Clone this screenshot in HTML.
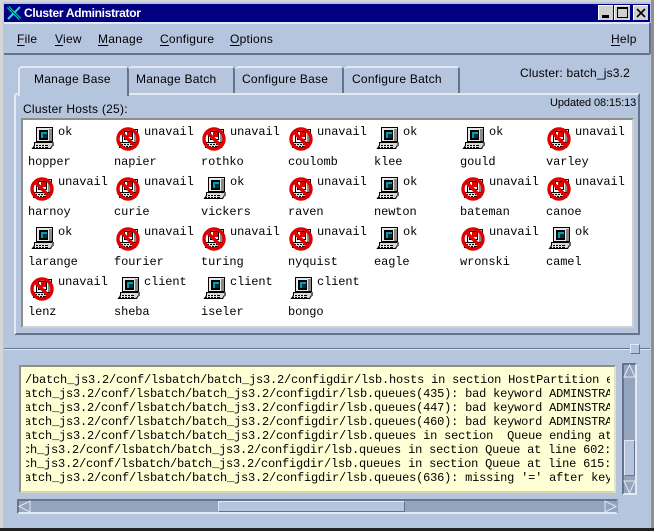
<!DOCTYPE html>
<html><head><meta charset="utf-8"><style>
html,body{margin:0;padding:0}
body{width:654px;height:531px;overflow:hidden;position:relative;background:#b5c5de;font:12px "Liberation Sans",sans-serif;color:#000}
div,span.a,svg.a{position:absolute}
.t{white-space:nowrap;line-height:14px;height:14px;letter-spacing:.25px}
u{text-underline-offset:2px}
.m{font-family:"Liberation Mono",monospace;font-size:12px;letter-spacing:-.1px;white-space:pre;line-height:14px;height:14px;margin-top:1px}
.tab{height:27px;top:66px;background:#b5c5de;border-top:2px solid #e2e9f3;box-sizing:border-box;border-right:2px solid #66738a;border-radius:4px 4px 0 0}
.lg{left:0;font-family:"Liberation Mono",monospace;font-size:12px;letter-spacing:-.2px;white-space:pre;line-height:14px;height:14px}
</style></head><body>
<svg width="0" height="0" style="position:absolute"><defs>
<symbol id="pc" viewBox="0 0 26 24"><g shape-rendering="crispEdges">
<path fill="#e8e8e8" stroke="#000" d="M6.5 .5h16v14h-16z"/>
<path fill="#8a8a8a" d="M19 2h3v12h-3z"/>
<path fill="#000" d="M9 3h9v10H9z"/>
<path fill="#00a0b0" d="M11 5h6v6h-6z"/>
<path fill="#003040" d="M13 7h4v4h-4z"/>
<path fill="#d8d8d8" stroke="#000" d="M4.5 15.5h18v3l-2 3h-18l2-3z"/>
<path fill="#000" d="M4 18h14v1H4zM3 20h15v1H3z"/><path fill="#fff" d="M5 18h1v1H5zM8 18h1v1H8zM11 18h1v1h-1zM14 18h1v1h-1zM5 20h1v1H5zM8 20h1v1H8zM11 20h1v1h-1zM14 20h1v1h-1z"/>
<path fill="#666" d="M22 15h2v4h-2z"/></g></symbol>
<symbol id="no" viewBox="0 0 26 24"><g shape-rendering="crispEdges">
<path fill="#f4f4f4" stroke="#000" d="M6.5 2.5h15v13h-15z"/>
<path fill="#8a8a8a" d="M18 4h3v11h-3z"/>
<path fill="#000" d="M8 4h9v9H8z"/>
<path fill="#fff" d="M9 5h7v7H9z"/>
<path fill="#e80000" d="M11 5h5v5h-5z"/>
<path fill="#d8d8d8" stroke="#000" d="M4.5 15.5h17v2l-2 3h-16l1-3z"/>
<path fill="#000" d="M5 17h13v1H5zM4 19h13v1H4z"/><path fill="#fff" d="M7 17h1v1H7zM10 17h1v1h-1zM13 17h1v1h-1zM6 19h1v1H6zM9 19h1v1H9zM12 19h1v1h-1z"/></g>
<circle cx="12" cy="12" r="10" fill="none" stroke="#e00000" stroke-width="3.4"/>
<path d="M5 5L19 19" stroke="#e00000" stroke-width="3.4"/></symbol>
</defs></svg>

<!-- window frame -->
<div style="left:0;top:0;width:654px;height:2px;background:#d6d6d6"></div>
<div style="left:0;top:0;width:3px;height:531px;background:#d6d6d6"></div>
<div style="left:651px;top:0;width:3px;height:531px;background:#8f8f8f"></div>
<div style="left:0;top:528px;width:654px;height:3px;background:#222"></div>
<div style="left:4px;top:4px;width:646px;height:18px;background:#000080"></div>
<svg class="a" style="left:6px;top:5px" width="16" height="16" viewBox="0 0 16 16"><path d="M2 2L14 14" stroke="#00d8c8" stroke-width="3"/><path d="M14 2L2 14" stroke="#20e0d0" stroke-width="2"/><path d="M2 2L14 14" stroke="#000" stroke-width=".8"/></svg>
<div class="t" style="left:24px;top:6px;color:#fff;font-weight:bold;font-size:12px;letter-spacing:-.3px">Cluster Administrator</div>
<div style="left:598px;top:5px;width:15px;height:15px;background:#d0d0d0;border-top:1px solid #fff;border-left:1px solid #fff;box-sizing:border-box"><div style="left:3px;top:9px;width:7px;height:3px;background:#000"></div></div>
<div style="left:614px;top:5px;width:16px;height:15px;background:#d0d0d0;border-top:1px solid #fff;border-left:1px solid #fff;box-sizing:border-box"><div style="left:2px;top:1px;width:11px;height:11px;box-sizing:border-box;border:1px solid #000;border-top-width:2px"></div></div>
<div style="left:633px;top:5px;width:15px;height:15px;background:#d0d0d0;border-top:1px solid #fff;border-left:1px solid #fff;box-sizing:border-box"><svg class="a" style="left:2px;top:2px" width="10" height="10"><path d="M1 1L9 9M9 1L1 9" stroke="#000" stroke-width="1.6"/></svg></div>

<!-- menu -->
<div style="left:4px;top:22px;width:646px;height:2px;background:#e2e9f3"></div>
<div style="left:4px;top:53px;width:646px;height:2px;background:#66738a"></div>
<div style="left:649px;top:23px;width:2px;height:31px;background:#66738a"></div>
<div class="t" style="left:17px;top:32px"><u>F</u>ile</div>
<div class="t" style="left:55px;top:32px"><u>V</u>iew</div>
<div class="t" style="left:98px;top:32px"><u>M</u>anage</div>
<div class="t" style="left:160px;top:32px"><u>C</u>onfigure</div>
<div class="t" style="left:230px;top:32px"><u>O</u>ptions</div>
<div class="t" style="left:611px;top:32px"><u>H</u>elp</div>

<!-- panel -->
<div style="left:14px;top:93px;width:626px;height:242px;box-sizing:border-box;border:2px solid;border-color:#e2e9f3 #66738a #66738a #e2e9f3;border-radius:3px 0 0 0"></div>
<!-- tabs -->
<div class="tab" style="left:128px;width:107px"></div>
<div class="tab" style="left:235px;width:109px"></div>
<div class="tab" style="left:344px;width:116px"></div>
<div class="tab" style="left:18px;width:111px;height:30px;border-left:2px solid #e2e9f3;z-index:2"></div>
<div class="t" style="left:34px;top:72px;z-index:3">Manage Base</div>
<div class="t" style="left:136px;top:72px">Manage Batch</div>
<div class="t" style="left:242px;top:72px">Configure Base</div>
<div class="t" style="left:352px;top:72px">Configure Batch</div>
<div class="t" style="left:520px;top:66px;letter-spacing:.2px">Cluster: batch_js3.2</div>
<div class="t" style="left:550px;top:96px;font-size:11px;letter-spacing:-.08px">Updated 08:15:13</div>
<div class="t" style="left:23px;top:102px">Cluster Hosts (25):</div>

<!-- white host area -->
<div style="left:21px;top:118px;width:613px;height:210px;background:#fff;box-sizing:border-box;border:2px solid;border-color:#8a8f8a #d0d0d0 #d0d0d0 #8a8f8a"></div>

<!-- row 1 -->
<svg class="a" style="left:30px;top:127px" width="26" height="24"><use href="#pc"/></svg><div class="m" style="left:58px;top:124px">ok</div><div class="m" style="left:28px;top:154px">hopper</div>
<svg class="a" style="left:116px;top:127px" width="26" height="24"><use href="#no"/></svg><div class="m" style="left:144px;top:124px">unavail</div><div class="m" style="left:114px;top:154px">napier</div>
<svg class="a" style="left:202px;top:127px" width="26" height="24"><use href="#no"/></svg><div class="m" style="left:230px;top:124px">unavail</div><div class="m" style="left:201px;top:154px">rothko</div>
<svg class="a" style="left:289px;top:127px" width="26" height="24"><use href="#no"/></svg><div class="m" style="left:317px;top:124px">unavail</div><div class="m" style="left:288px;top:154px">coulomb</div>
<svg class="a" style="left:375px;top:127px" width="26" height="24"><use href="#pc"/></svg><div class="m" style="left:403px;top:124px">ok</div><div class="m" style="left:374px;top:154px">klee</div>
<svg class="a" style="left:461px;top:127px" width="26" height="24"><use href="#pc"/></svg><div class="m" style="left:489px;top:124px">ok</div><div class="m" style="left:460px;top:154px">gould</div>
<svg class="a" style="left:547px;top:127px" width="26" height="24"><use href="#no"/></svg><div class="m" style="left:575px;top:124px">unavail</div><div class="m" style="left:546px;top:154px">varley</div>
<!-- row 2 -->
<svg class="a" style="left:30px;top:177px" width="26" height="24"><use href="#no"/></svg><div class="m" style="left:58px;top:174px">unavail</div><div class="m" style="left:28px;top:204px">harnoy</div>
<svg class="a" style="left:116px;top:177px" width="26" height="24"><use href="#no"/></svg><div class="m" style="left:144px;top:174px">unavail</div><div class="m" style="left:114px;top:204px">curie</div>
<svg class="a" style="left:202px;top:177px" width="26" height="24"><use href="#pc"/></svg><div class="m" style="left:230px;top:174px">ok</div><div class="m" style="left:201px;top:204px">vickers</div>
<svg class="a" style="left:289px;top:177px" width="26" height="24"><use href="#no"/></svg><div class="m" style="left:317px;top:174px">unavail</div><div class="m" style="left:288px;top:204px">raven</div>
<svg class="a" style="left:375px;top:177px" width="26" height="24"><use href="#pc"/></svg><div class="m" style="left:403px;top:174px">ok</div><div class="m" style="left:374px;top:204px">newton</div>
<svg class="a" style="left:461px;top:177px" width="26" height="24"><use href="#no"/></svg><div class="m" style="left:489px;top:174px">unavail</div><div class="m" style="left:460px;top:204px">bateman</div>
<svg class="a" style="left:547px;top:177px" width="26" height="24"><use href="#no"/></svg><div class="m" style="left:575px;top:174px">unavail</div><div class="m" style="left:546px;top:204px">canoe</div>
<!-- row 3 -->
<svg class="a" style="left:30px;top:227px" width="26" height="24"><use href="#pc"/></svg><div class="m" style="left:58px;top:224px">ok</div><div class="m" style="left:28px;top:254px">larange</div>
<svg class="a" style="left:116px;top:227px" width="26" height="24"><use href="#no"/></svg><div class="m" style="left:144px;top:224px">unavail</div><div class="m" style="left:114px;top:254px">fourier</div>
<svg class="a" style="left:202px;top:227px" width="26" height="24"><use href="#no"/></svg><div class="m" style="left:230px;top:224px">unavail</div><div class="m" style="left:201px;top:254px">turing</div>
<svg class="a" style="left:289px;top:227px" width="26" height="24"><use href="#no"/></svg><div class="m" style="left:317px;top:224px">unavail</div><div class="m" style="left:288px;top:254px">nyquist</div>
<svg class="a" style="left:375px;top:227px" width="26" height="24"><use href="#pc"/></svg><div class="m" style="left:403px;top:224px">ok</div><div class="m" style="left:374px;top:254px">eagle</div>
<svg class="a" style="left:461px;top:227px" width="26" height="24"><use href="#no"/></svg><div class="m" style="left:489px;top:224px">unavail</div><div class="m" style="left:460px;top:254px">wronski</div>
<svg class="a" style="left:547px;top:227px" width="26" height="24"><use href="#pc"/></svg><div class="m" style="left:575px;top:224px">ok</div><div class="m" style="left:546px;top:254px">camel</div>
<!-- row 4 -->
<svg class="a" style="left:30px;top:277px" width="26" height="24"><use href="#no"/></svg><div class="m" style="left:58px;top:274px">unavail</div><div class="m" style="left:28px;top:304px">lenz</div>
<svg class="a" style="left:116px;top:277px" width="26" height="24"><use href="#pc"/></svg><div class="m" style="left:144px;top:274px">client</div><div class="m" style="left:114px;top:304px">sheba</div>
<svg class="a" style="left:202px;top:277px" width="26" height="24"><use href="#pc"/></svg><div class="m" style="left:230px;top:274px">client</div><div class="m" style="left:201px;top:304px">iseler</div>
<svg class="a" style="left:289px;top:277px" width="26" height="24"><use href="#pc"/></svg><div class="m" style="left:317px;top:274px">client</div><div class="m" style="left:288px;top:304px">bongo</div>

<!-- sash -->
<div style="left:4px;top:348px;width:646px;height:1px;background:#66738a"></div>
<div style="left:4px;top:349px;width:646px;height:1px;background:#e2e9f3"></div>
<div style="left:630px;top:344px;width:10px;height:10px;box-sizing:border-box;background:#b5c5de;border:1px solid;border-color:#e2e9f3 #66738a #66738a #e2e9f3"></div>

<!-- log -->
<div style="left:19px;top:365px;width:597px;height:128px;background:#ffffd6;box-sizing:border-box;border:2px solid;border-color:#8f9080 #e2e3c0 #d8d8b0 #8f9080"></div>
<div style="left:26px;top:373px;width:584px;height:112px;overflow:hidden">
<div class="lg" style="top:0;left:-1px">/batch_js3.2/conf/lsbatch/batch_js3.2/configdir/lsb.hosts in section HostPartition ending</div>
<div class="lg" style="top:14px;left:-2px">atch_js3.2/conf/lsbatch/batch_js3.2/configdir/lsb.queues(435): bad keyword ADMINSTRATORS</div>
<div class="lg" style="top:28px;left:-2px">atch_js3.2/conf/lsbatch/batch_js3.2/configdir/lsb.queues(447): bad keyword ADMINSTRATORS</div>
<div class="lg" style="top:42px;left:-2px">atch_js3.2/conf/lsbatch/batch_js3.2/configdir/lsb.queues(460): bad keyword ADMINSTRATORS</div>
<div class="lg" style="top:56px;left:-2px">atch_js3.2/conf/lsbatch/batch_js3.2/configdir/lsb.queues in section  Queue ending at line</div>
<div class="lg" style="top:70px;left:-3px">ch_js3.2/conf/lsbatch/batch_js3.2/configdir/lsb.queues in section Queue at line 602: bad</div>
<div class="lg" style="top:84px;left:-3px">ch_js3.2/conf/lsbatch/batch_js3.2/configdir/lsb.queues in section Queue at line 615: bad</div>
<div class="lg" style="top:98px;left:-2px">atch_js3.2/conf/lsbatch/batch_js3.2/configdir/lsb.queues(636): missing '=' after keyword</div>
</div>

<!-- v scrollbar -->
<div style="left:622px;top:363px;width:15px;height:132px;box-sizing:border-box;background:#94a4bd;border:2px solid;border-color:#66738a #e2e9f3 #e2e9f3 #66738a"></div>
<svg class="a" style="left:623px;top:364px" width="13" height="130"><path d="M6.5 1L12 13H1z" fill="#94a4bd" stroke="#e2e9f3"/><path d="M6.5 129L1 117h11z" fill="#94a4bd" stroke="#e2e9f3"/></svg>
<div style="left:624px;top:440px;width:11px;height:36px;box-sizing:border-box;background:#b5c5de;border:1px solid;border-color:#e2e9f3 #66738a #66738a #e2e9f3"></div>

<!-- h scrollbar -->
<div style="left:17px;top:499px;width:601px;height:15px;box-sizing:border-box;background:#94a4bd;border:2px solid;border-color:#66738a #94a4bd #e2e9f3 #66738a"></div>
<svg class="a" style="left:18px;top:500px" width="599" height="13"><path d="M1 6.5L12 1v11z" fill="#94a4bd" stroke="#e2e9f3"/><path d="M598 6.5L587 1v11z" fill="#94a4bd" stroke="#e2e9f3"/></svg>
<div style="left:218px;top:501px;width:187px;height:11px;box-sizing:border-box;background:#b5c5de;border:1px solid;border-color:#e2e9f3 #66738a #66738a #e2e9f3"></div>
</body></html>
